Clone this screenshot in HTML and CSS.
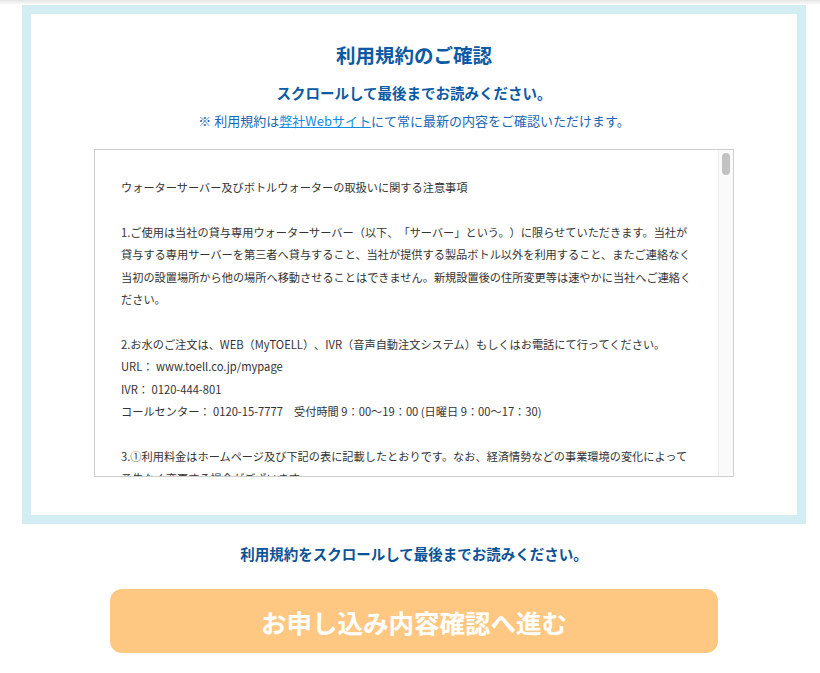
FILE: index.html
```html
<!DOCTYPE html>
<html lang="ja">
<head>
  <meta charset="UTF-8">
  <meta name="viewport" content="width=device-width, initial-scale=1.0">
  <title>利用規約のご確認</title>
  <link rel="stylesheet" href="styles.css">
</head>
<body>
  <div class="top-shade"></div>

  <main class="wrap">
    <!-- 規約ボックス -->
    <section class="terms">
      <h1 class="terms-title">利用規約のご確認</h1>
      <p class="terms-lead">スクロールして最後までお読みください。</p>
      <p class="terms-note">※ 利用規約は<a href="#">弊社Webサイト</a>にて常に最新の内容をご確認いただけます。</p>

      <div class="terms-box">
        <div class="terms-body">
          <p>ウォーターサーバー及びボトルウォーターの取扱いに関する注意事項</p>
          <p>1.ご使用は当社の貸与専用ウォーターサーバー（以下、「サーバー」という。）に限らせていただきます。当社が貸与する専用サーバーを第三者へ貸与すること、当社が提供する製品ボトル以外を利用すること、またご連絡なく当初の設置場所から他の場所へ移動させることはできません。新規設置後の住所変更等は速やかに当社へご連絡ください。</p>
          <p>2.お水のご注文は、WEB（MyTOELL）、IVR（音声自動注文システム）もしくはお電話にて行ってください。<br>
          URL： www.toell.co.jp/mypage<br>
          IVR： 0120-444-801<br>
          コールセンター： 0120-15-7777　受付時間 9：00～19：00 (日曜日 9：00～17：30)</p>
          <p>3.①利用料金はホームページ及び下記の表に記載したとおりです。なお、経済情勢などの事業環境の変化によって予告なく変更する場合がございます。</p>
        </div>
        <div class="scrollbar"><span class="scrollbar-thumb"></span></div>
      </div>
    </section>

    <p class="read-msg">利用規約をスクロールして最後までお読みください。</p>
    <button class="next-button" disabled>お申し込み内容確認へ進む</button>
  </main>
</body>
</html>
```

FILE: styles.css
```css
body {
  margin: 0;
  background: #fff;
  font-family: "Noto Sans CJK JP", "Noto Sans", sans-serif;
  color: #333;
  text-spacing-trim: space-all;
}

.top-shade {
  height: 5px;
  background: linear-gradient(#e4e4e4, #fff);
}

.wrap {
  width: 784px;
  margin-left: 22px;
  display: flex;
  flex-direction: column;
  align-items: center;
}

/* light blue frame */
.terms {
  box-sizing: border-box;
  width: 784px;
  border: 9px solid #d2eef3;
  background: #fff;
  padding: 26px 0 38px;
  display: flex;
  flex-direction: column;
  align-items: center;
}

.terms-title {
  margin: 0;
  font-size: 19.5px;
  line-height: 29px;
  font-weight: 700;
  color: #0b5aa4;
}

.terms-lead {
  margin: 13px 0 0;
  font-size: 14.5px;
  line-height: 21px;
  font-weight: 700;
  color: #0b5aa4;
}

.terms-note {
  margin: 9px 0 0;
  font-size: 13px;
  line-height: 18px;
  color: #1867b4;
}

.terms-note a {
  color: #0d8de0;
  text-decoration: underline;
}

.terms-box {
  margin-top: 19px;
  width: 640px;
  height: 328px;
  box-sizing: border-box;
  border: 1px solid #cfcfcf;
  display: flex;
  overflow: hidden;
}

.terms-body {
  flex: 1;
  padding: 26px 24px 0 26px;
  font-size: 11.2px;
  line-height: 2;
  color: #333;
  overflow: hidden;
}

.terms-body p {
  margin: 0 0 22.4px;
}

.scrollbar {
  width: 15px;
  flex: none;
  box-sizing: border-box;
  border-left: 1px solid #ececec;
  background: #fafafa;
  padding: 3px 0 0 3px;
}

.scrollbar-thumb {
  display: block;
  width: 8px;
  height: 22px;
  border-radius: 4px;
  background: #c2c2c2;
}

.read-msg {
  margin: 19px 0 0;
  font-size: 14.5px;
  line-height: 21px;
  font-weight: 700;
  color: #0d5294;
}

.next-button {
  margin-top: 25px;
  width: 608px;
  height: 64px;
  border: none;
  border-radius: 12px;
  background: #ffc882;
  color: #fff;
  font-family: inherit;
  font-size: 25.5px;
  font-weight: 700;
  cursor: default;
}
```
